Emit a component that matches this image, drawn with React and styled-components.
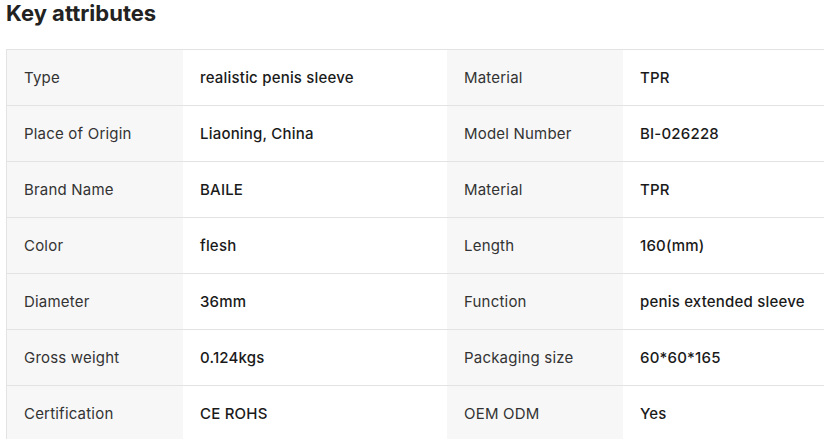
import React from "react";
import styled, {createGlobalStyle} from "styled-components";

const GlobalStyle = createGlobalStyle`
  html, body {
    margin: 0;
    padding: 0;
    background: #fff;
    overflow: hidden;
  }
  body {
    font-family: Inter, "Noto Sans", sans-serif;
    color: #222;
  }
`;

const Section = styled.section`
  padding: 0 0 0 6px;
  width: 900px;
`;

const Heading = styled.h2`
  margin: 0;
  font-size: 22px;
  line-height: 26px;
  font-weight: 700;
  color: #222;
`;

const Table = styled.div`
  margin-top: 23px;
  display: grid;
  grid-template-columns: 176px 264px 176px 264px;
  border-left: 1px solid #e3e3e3;
  border-top: 1px solid #e3e3e3;
`;

const Cell = styled.div`
  height: 55px;
  display: flex;
  align-items: center;
  padding: 0 17px;
  font-size: 15px;
  letter-spacing: 0.2px;
  white-space: nowrap;
  border-bottom: 1px solid #e3e3e3;
  background: ${({label}) => (label ? "#f7f7f7" : "#fff")};
  color: ${({label}) => (label ? "#333" : "#1a1a1a")};
  font-weight: ${({label}) => (label ? 400 : 500)};
`;

const rows = [
    ["Type", "realistic penis sleeve", "Material", "TPR"],
    ["Place of Origin", "Liaoning, China", "Model Number", "BI-026228"],
    ["Brand Name", "BAILE", "Material", "TPR"],
    ["Color", "flesh", "Length", "160(mm)"],
    ["Diameter", "36mm", "Function", "penis extended sleeve"],
    ["Gross weight", "0.124kgs", "Packaging size", "60*60*165"],
    ["Certification", "CE ROHS", "OEM ODM", "Yes"],
];

const App = () => {
    return (
        <>
            <GlobalStyle/>
            <Section>
                <Heading>Key attributes</Heading>
                <Table>
                    {rows.map((r, i) => (
                        <React.Fragment key={i}>
                            <Cell label>{r[0]}</Cell>
                            <Cell>{r[1]}</Cell>
                            <Cell label>{r[2]}</Cell>
                            <Cell>{r[3]}</Cell>
                        </React.Fragment>
                    ))}
                </Table>
            </Section>
        </>
    );
};

export default App;
